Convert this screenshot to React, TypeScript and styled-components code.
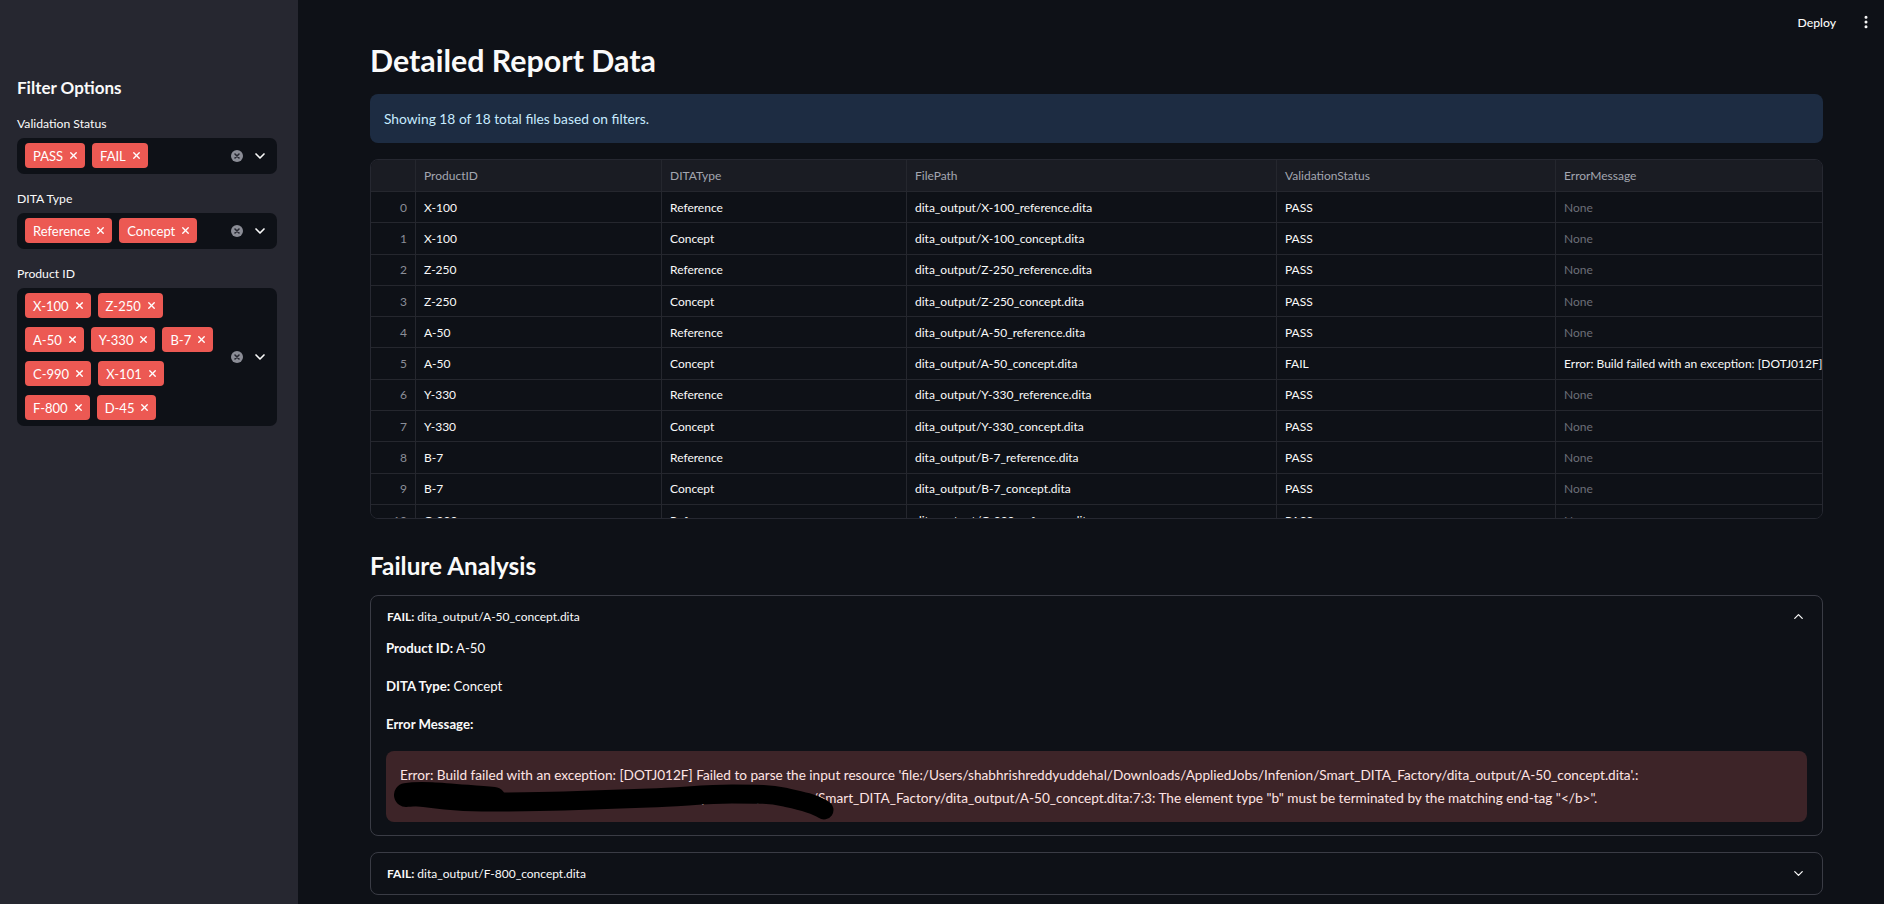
import React from "react";
import styled, { createGlobalStyle } from "styled-components";
import { ChevronDown, ChevronUp, EllipsisVertical, X } from "lucide-react";

const FONT = `"Lato", "Noto Sans", "Liberation Sans", sans-serif`;

const GlobalStyle = createGlobalStyle`
  html, body {
    margin: 0;
    padding: 0;
    background: #0e1117;
    color: #fafafa;
    font-family: ${FONT};
  }
  * {
    box-sizing: border-box;
  }
`;

const Shell = styled.div`
  display: flex;
  width: 1884px;
  height: 904px;
  overflow: hidden;
  background: #0e1117;
`;

/* ---------- sidebar ---------- */

const Sidebar = styled.aside`
  width: 298px;
  flex: none;
  background: #262730;
  padding: 77px 21px 0 17px;
`;

const SidebarTitle = styled.h3`
  margin: 0 0 17px;
  font-size: 17px;
  line-height: 22px;
  font-weight: 700;
  color: #fafafa;
`;

const FilterGroup = styled.div`
  margin-bottom: 17px;
`;

const FilterLabel = styled.div`
  font-size: 12.2px;
  line-height: 16px;
  margin-bottom: 6px;
  color: #fafafa;
`;

const MultiSelect = styled.div`
  display: flex;
  align-items: center;
  background: #0e1117;
  border-radius: 7px;
  min-height: 36px;
  padding: 5px 0 6px 8px;
`;

const TagList = styled.div`
  flex: 1;
  display: flex;
  flex-wrap: wrap;
  gap: 9px 7px;
  padding-right: 6px;
`;

const Tag = styled.span`
  display: inline-flex;
  align-items: center;
  gap: 5px;
  height: 25px;
  padding: 0 6px 0 8px;
  border-radius: 4px;
  background: #ec5953;
  color: #ffffff;
  font-size: 13px;
  white-space: nowrap;
`;

const SelectIcons = styled.div`
  display: flex;
  align-items: center;
  gap: 9px;
  width: 46px;
  flex: none;
`;

const ClearIcon = () => (
  <svg width="12" height="12" viewBox="0 0 12 12">
    <circle cx="6" cy="6" r="6" fill="#8b8d96" />
    <path d="M4 4 L8 8 M8 4 L4 8" stroke="#262730" strokeWidth="1.6" strokeLinecap="round" />
  </svg>
);

interface FilterProps {
  label: string;
  values: string[];
}

const Filter: React.FC<FilterProps> = ({ label, values }) => (
  <FilterGroup>
    <FilterLabel>{label}</FilterLabel>
    <MultiSelect>
      <TagList>
        {values.map((v) => (
          <Tag key={v}>
            {v}
            <X size={11} strokeWidth={3} />
          </Tag>
        ))}
      </TagList>
      <SelectIcons>
        <ClearIcon />
        <ChevronDown size={16} strokeWidth={2.5} color="#fafafa" />
      </SelectIcons>
    </MultiSelect>
  </FilterGroup>
);

/* ---------- main ---------- */

const Main = styled.main`
  flex: 1;
  display: flex;
  flex-direction: column;
  min-width: 0;
`;

const Toolbar = styled.header`
  height: 40px;
  flex: none;
  display: flex;
  align-items: center;
  justify-content: flex-end;
  gap: 22px;
  padding: 4px 10px 0 0;
  font-size: 12.2px;
  color: #fafafa;
`;

const DeployButton = styled.span`
  font-weight: 500;
`;

const Content = styled.div`
  padding: 0 61px 0 72px;
`;

const PageTitle = styled.h2`
  margin: 0 0 14px;
  font-size: 30.4px;
  line-height: 40px;
  font-weight: 700;
  color: #fafafa;
`;

const InfoBox = styled.div`
  height: 49px;
  display: flex;
  align-items: center;
  padding: 0 14px;
  border-radius: 8px;
  background: #1d2c42;
  color: #c7ebff;
  font-size: 13.8px;
`;

const TableFrame = styled.div`
  margin-top: 16px;
  height: 360px;
  overflow: hidden;
  border: 1px solid #262831;
  border-radius: 8px;
`;

const TableRow = styled.div<{ $head?: boolean }>`
  display: grid;
  grid-template-columns: 45px 246px 245px 370px 279px 1fr;
  height: ${(p) => (p.$head ? "32px" : "31.3px")};
  background: ${(p) => (p.$head ? "#1a1c23" : "#0e1117")};
  border-bottom: 1px solid #25272e;
`;

const Cell = styled.div<{ $tone?: "head" | "muted" | "index" }>`
  display: flex;
  align-items: center;
  justify-content: ${(p) => (p.$tone === "index" ? "flex-end" : "flex-start")};
  padding: 0 8px;
  overflow: hidden;
  white-space: nowrap;
  font-size: 12px;
  border-right: 1px solid #25272e;
  color: ${(p) =>
    p.$tone === "head"
      ? "#a3a6b0"
      : p.$tone === "muted"
      ? "#6c6f78"
      : p.$tone === "index"
      ? "#8b8e97"
      : "#fafafa"};

  &:last-child {
    border-right: none;
  }
`;

const SectionTitle = styled.h3`
  margin: 32px 0 14px;
  font-size: 24.3px;
  line-height: 30px;
  font-weight: 700;
  color: #fafafa;
`;

const Expander = styled.div`
  border: 1px solid #3a3c45;
  border-radius: 8px;
  margin-bottom: 16px;
`;

const ExpanderHeader = styled.div`
  height: 41px;
  display: flex;
  align-items: center;
  justify-content: space-between;
  padding: 0 16px;
  font-size: 12px;
  color: #fafafa;
`;

const ExpanderBody = styled.div`
  padding: 0 15px 13px;
`;

const Field = styled.p`
  margin: 0 0 15px;
  font-size: 13.2px;
  line-height: 23px;
  color: #fafafa;
`;

const ErrorBox = styled.div`
  position: relative;
  padding: 13px 14px 12px;
  border-radius: 8px;
  background: #3d2428;
  color: #ffe4e4;
  font-size: 13.6px;
  line-height: 23px;
`;

const ErrorLine = styled.div`
  white-space: nowrap;
`;

const Scribble = styled.svg`
  position: absolute;
  left: 8px;
  top: 27px;
`;

const rows: [string, string, string, string][] = [
  ["X-100", "Reference", "PASS", ""],
  ["X-100", "Concept", "PASS", ""],
  ["Z-250", "Reference", "PASS", ""],
  ["Z-250", "Concept", "PASS", ""],
  ["A-50", "Reference", "PASS", ""],
  ["A-50", "Concept", "FAIL", "Error: Build failed with an exception: [DOTJ012F] Failed to parse the input resource"],
  ["Y-330", "Reference", "PASS", ""],
  ["Y-330", "Concept", "PASS", ""],
  ["B-7", "Reference", "PASS", ""],
  ["B-7", "Concept", "PASS", ""],
  ["C-990", "Reference", "PASS", ""],
  ["C-990", "Concept", "PASS", ""],
];

const ERROR_LINE_1 =
  "Error: Build failed with an exception: [DOTJ012F] Failed to parse the input resource 'file:/Users/shabhrishreddyuddehal/Downloads/AppliedJobs/Infenion/Smart_DITA_Factory/dita_output/A-50_concept.dita'.:";
const ERROR_LINE_2 =
  "file:/Users/shabhrishreddyuddehal/Downloads/AppliedJobs/Infenion/Smart_DITA_Factory/dita_output/A-50_concept.dita:7:3: The element type \"b\" must be terminated by the matching end-tag \"</b>\".";

const App: React.FC = () => {
  return (
    <>
      <GlobalStyle />
      <Shell>
        <Sidebar>
          <SidebarTitle>Filter Options</SidebarTitle>
          <Filter label="Validation Status" values={["PASS", "FAIL"]} />
          <Filter label="DITA Type" values={["Reference", "Concept"]} />
          <Filter
            label="Product ID"
            values={["X-100", "Z-250", "A-50", "Y-330", "B-7", "C-990", "X-101", "F-800", "D-45"]}
          />
        </Sidebar>

        <Main>
          <Toolbar>
            <DeployButton>Deploy</DeployButton>
            <EllipsisVertical size={16} strokeWidth={2.5} />
          </Toolbar>

          <Content>
            <PageTitle>Detailed Report Data</PageTitle>
            <InfoBox>Showing 18 of 18 total files based on filters.</InfoBox>

            <TableFrame>
              <TableRow $head>
                <Cell $tone="head" />
                <Cell $tone="head">ProductID</Cell>
                <Cell $tone="head">DITAType</Cell>
                <Cell $tone="head">FilePath</Cell>
                <Cell $tone="head">ValidationStatus</Cell>
                <Cell $tone="head">ErrorMessage</Cell>
              </TableRow>
              {rows.map(([id, type, status, err], i) => (
                <TableRow key={i}>
                  <Cell $tone="index">{i}</Cell>
                  <Cell>{id}</Cell>
                  <Cell>{type}</Cell>
                  <Cell>{`dita_output/${id}_${type.toLowerCase()}.dita`}</Cell>
                  <Cell>{status}</Cell>
                  {err ? <Cell>{err}</Cell> : <Cell $tone="muted">None</Cell>}
                </TableRow>
              ))}
            </TableFrame>

            <SectionTitle>Failure Analysis</SectionTitle>

            <Expander>
              <ExpanderHeader>
                <span>
                  <b>FAIL:</b> dita_output/A-50_concept.dita
                </span>
                <ChevronUp size={15} strokeWidth={2} />
              </ExpanderHeader>
              <ExpanderBody>
                <Field>
                  <b>Product ID:</b> A-50
                </Field>
                <Field>
                  <b>DITA Type:</b> Concept
                </Field>
                <Field>
                  <b>Error Message:</b>
                </Field>
                <ErrorBox>
                  <ErrorLine>{ERROR_LINE_1}</ErrorLine>
                  <ErrorLine>{ERROR_LINE_2}</ErrorLine>
                  <Scribble width="450" height="44" viewBox="0 0 450 44">
                    <path
                      d="M12 17 C 40 21, 60 24, 88 24 S 140 24, 170 23 S 222 21, 255 20 S 310 16, 338 16 S 376 16, 390 19 S 420 25, 430 32"
                      fill="none"
                      stroke="#000"
                      strokeWidth="19"
                      strokeLinecap="round"
                    />
                    <path
                      d="M12 17 C 30 14, 60 18, 100 21"
                      fill="none"
                      stroke="#000"
                      strokeWidth="24"
                      strokeLinecap="round"
                    />
                  </Scribble>
                </ErrorBox>
              </ExpanderBody>
            </Expander>

            <Expander>
              <ExpanderHeader>
                <span>
                  <b>FAIL:</b> dita_output/F-800_concept.dita
                </span>
                <ChevronDown size={15} strokeWidth={2} />
              </ExpanderHeader>
            </Expander>
          </Content>
        </Main>
      </Shell>
    </>
  );
};

export default App;
